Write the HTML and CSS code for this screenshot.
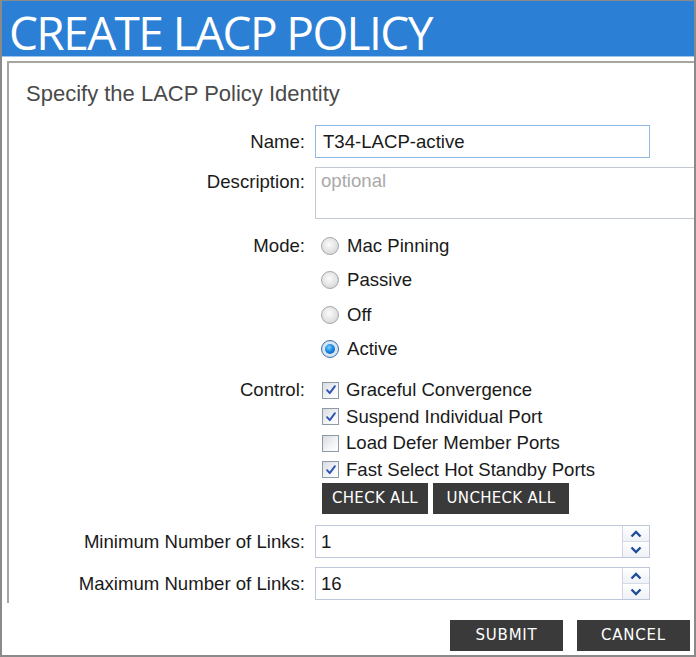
FILE: index.html
```html
<!DOCTYPE html>
<html>
<head>
<meta charset="utf-8">
<link rel="stylesheet" href="styles.css">
</head>
<body>
<div class="dialog">
  <header class="titlebar"><h1 class="title">CREATE LACP POLICY</h1></header>
  <div class="panel">
    <h2 class="heading">Specify the LACP Policy Identity</h2>
    <div class="form">
      <div class="lbl row-name">Name:</div>
      <div class="ctl row-name"><div class="field field-name">T34-LACP-active</div></div>

      <div class="lbl row-desc top">Description:</div>
      <div class="ctl row-desc"><div class="field field-desc">optional</div></div>

      <div class="lbl row-mode top">Mode:</div>
      <div class="ctl row-mode">
        <div class="opt radio-opt"><span class="radio"></span>Mac Pinning</div>
        <div class="opt radio-opt"><span class="radio"></span>Passive</div>
        <div class="opt radio-opt"><span class="radio"></span>Off</div>
        <div class="opt radio-opt"><span class="radio checked"></span>Active</div>
      </div>

      <div class="lbl row-ctrl top">Control:</div>
      <div class="ctl row-ctrl">
        <div class="opt check-opt"><span class="check on"><svg viewBox="0 0 16 16"><path d="M3.5 8.2 L6.6 11.6 L12.5 3.6" fill="none" stroke="#2b55b5" stroke-width="2.2" stroke-linecap="round" stroke-linejoin="round"/></svg></span>Graceful Convergence</div>
        <div class="opt check-opt"><span class="check on"><svg viewBox="0 0 16 16"><path d="M3.5 8.2 L6.6 11.6 L12.5 3.6" fill="none" stroke="#2b55b5" stroke-width="2.2" stroke-linecap="round" stroke-linejoin="round"/></svg></span>Suspend Individual Port</div>
        <div class="opt check-opt"><span class="check"></span>Load Defer Member Ports</div>
        <div class="opt check-opt"><span class="check on"><svg viewBox="0 0 16 16"><path d="M3.5 8.2 L6.6 11.6 L12.5 3.6" fill="none" stroke="#2b55b5" stroke-width="2.2" stroke-linecap="round" stroke-linejoin="round"/></svg></span>Fast Select Hot Standby Ports</div>
        <div class="btnrow">
          <button class="btn btn-check">CHECK ALL</button>
          <button class="btn btn-uncheck">UNCHECK ALL</button>
        </div>
      </div>

      <div class="lbl row-min">Minimum Number of Links:</div>
      <div class="ctl row-min">
        <div class="spin"><span class="spin-val">1</span>
          <span class="arrows">
            <span class="arr"><svg viewBox="0 0 12 8"><path d="M1.5 6.5 L6 2 L10.5 6.5" fill="none" stroke="#1f4e96" stroke-width="2.4"/></svg></span>
            <span class="arr"><svg viewBox="0 0 12 8"><path d="M1.5 1.5 L6 6 L10.5 1.5" fill="none" stroke="#1f4e96" stroke-width="2.4"/></svg></span>
          </span>
        </div>
      </div>

      <div class="lbl row-max">Maximum Number of Links:</div>
      <div class="ctl row-max">
        <div class="spin"><span class="spin-val">16</span>
          <span class="arrows">
            <span class="arr"><svg viewBox="0 0 12 8"><path d="M1.5 6.5 L6 2 L10.5 6.5" fill="none" stroke="#1f4e96" stroke-width="2.4"/></svg></span>
            <span class="arr"><svg viewBox="0 0 12 8"><path d="M1.5 1.5 L6 6 L10.5 1.5" fill="none" stroke="#1f4e96" stroke-width="2.4"/></svg></span>
          </span>
        </div>
      </div>
    </div>
  </div>
  <div class="footer">
    <button class="btn btn-foot">SUBMIT</button>
    <button class="btn btn-foot">CANCEL</button>
  </div>
</div>
</body>
</html>
```

FILE: styles.css
```css
* { box-sizing: border-box; }
html, body { margin: 0; padding: 0; background: #fff; }

.dialog {
  width: 696px;
  height: 657px;
  border: 2px solid #8a8a8a;
  border-top-width: 1px;
  overflow: hidden;
  font-family: "Liberation Sans", Arial, sans-serif;
  color: #1a1a1a;
  display: flex;
  flex-direction: column;
}

.titlebar {
  background: #2b80d6;
  height: 56px;
  border-bottom: 1px solid #9cc6ee;
  flex: none;
  display: flex;
  align-items: flex-start;
  padding-left: 7px;
}
.title {
  margin: 0;
  font-family: "Open Sans", "Noto Sans", sans-serif;
  font-weight: 400;
  font-size: 46px;
  letter-spacing: -1.6px;
  padding-right: 4px;
  color: #fff;
  line-height: normal;
}

.panel {
  margin: 4px -40px 0 5px;
  border-top: 2px solid #a6a6a6;
  border-left: 2px solid #a6a6a6;
  padding: 18px 0 2px 0;
  flex: none;
  height: 542px;
}
.heading {
  margin: 0 0 0 17px;
  font-family: "Liberation Sans", Arial, sans-serif;
  font-weight: 400;
  font-size: 22px;
  line-height: 26px;
  color: #4a4a4a;
}

.form {
  display: grid;
  grid-template-columns: 296px 1fr;
  column-gap: 10px;
  font-size: 18.6px;
  margin-top: 18px;
}
.lbl {
  text-align: right;
  line-height: 33px;
  white-space: nowrap;
}
.row-desc { margin-top: 9px; }
.row-mode { margin-top: 10px; }
.row-ctrl { margin-top: 11px; }
.row-min { margin-top: 11px; }
.row-max { margin-top: 9px; }
.lbl.row-desc { line-height: 30px; }
.lbl.row-mode { line-height: 34px; }
.lbl.row-ctrl { line-height: 26px; }

.field {
  height: 33px;
  border: 1px solid #c3c9d3;
  background: #fff;
  padding: 0 7px;
  line-height: 31px;
}
.field-name {
  width: 335px;
  border-color: #8fb9e4;
}
.field-desc {
  width: 420px;
  height: 52px;
  color: #a9a9a9;
  line-height: 26px;
  padding-left: 5px;
}

.opt {
  display: flex;
  align-items: center;
  white-space: nowrap;
}
.radio-opt { height: 34.3px; }
.check-opt { height: 26.5px; }

.radio {
  width: 18px;
  height: 18px;
  border-radius: 50%;
  margin: 0 8px 0 6px;
  border: 1px solid #a3a8ae;
  background: radial-gradient(circle at 45% 40%, #fbfbfb 0%, #e3e3e3 55%, #c9c9c9 100%);
  flex: none;
  position: relative;
}
.radio.checked {
  border-color: #3d6fa6;
  background: radial-gradient(circle at 50% 50%, #e9f2fb 0%, #c9dbee 100%);
}
.radio.checked::after {
  content: "";
  position: absolute;
  left: 3px; top: 3px;
  width: 10px; height: 10px;
  border-radius: 50%;
  background: radial-gradient(circle at 40% 35%, #7fd0ff 0%, #1c8be0 45%, #0a4f9c 100%);
}

.check {
  width: 17px;
  height: 17px;
  margin: 0 7px 0 7px;
  border: 1px solid #8f9aa7;
  background: linear-gradient(135deg, #d7dbe0 0%, #f4f5f7 60%, #ffffff 100%);
  flex: none;
  display: flex;
  align-items: center;
  justify-content: center;
}
.check svg { width: 14px; height: 14px; }

.btnrow {
  display: flex;
  gap: 5px;
  margin-left: 7px;
  height: 31px;
}
.btn {
  background: #3a3a3a;
  color: #fff;
  border: none;
  font-family: "DejaVu Sans", "Liberation Sans", sans-serif;
  font-size: 15px;
  letter-spacing: 0.3px;
  height: 31px;
  padding: 0;
  line-height: 31px;
}
.btn-check { width: 106px; }
.btn-uncheck { width: 136px; }

.spin {
  width: 335px;
  height: 33px;
  border: 1px solid #bfc8d8;
  display: flex;
  background: #fff;
}
.spin-val {
  flex: 1;
  padding-left: 5px;
  line-height: 31px;
}
.arrows {
  width: 27px;
  border-left: 1px solid #cfd6e2;
  display: flex;
  flex-direction: column;
}
.arr {
  flex: 1;
  display: flex;
  align-items: center;
  justify-content: center;
  background: linear-gradient(#ffffff, #eef1f6);
}
.arr + .arr { border-top: 1px solid #d5dbe5; }
.arr svg { width: 12px; height: 8px; }

.footer {
  flex: none;
  display: flex;
  justify-content: flex-end;
  gap: 14px;
  padding-right: 4px;
  margin-top: 17px;
}
.btn-foot {
  width: 113px;
  letter-spacing: 0.8px;
}
```
